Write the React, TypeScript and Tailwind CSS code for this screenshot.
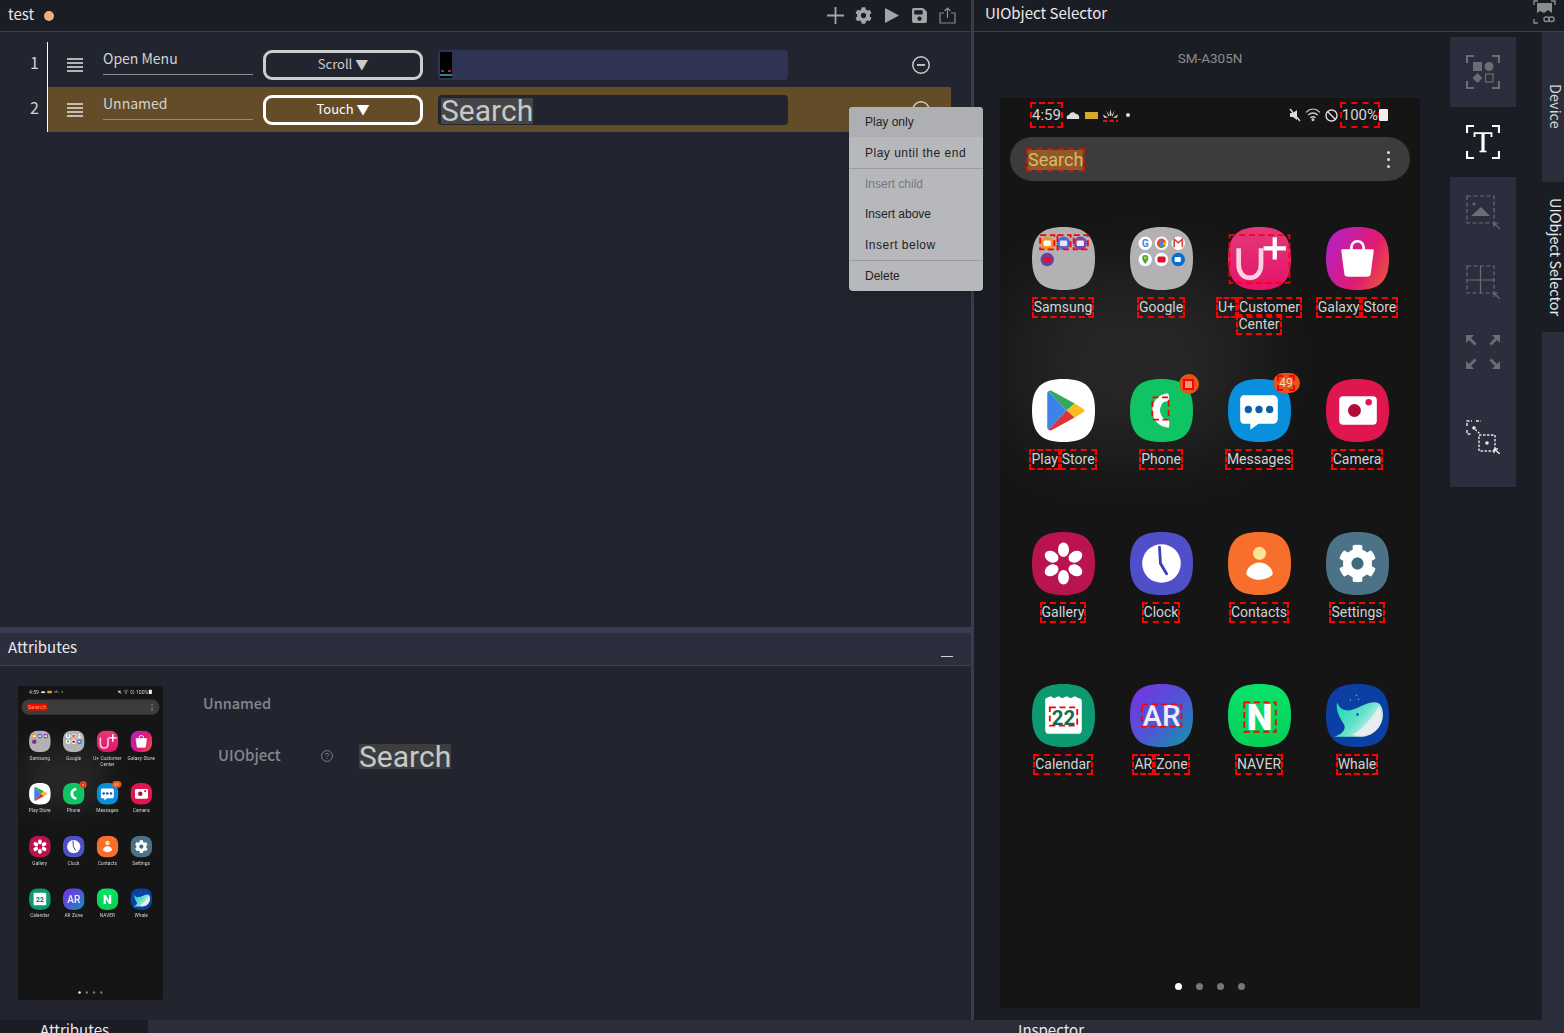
import React from "react";
import { FaCog, FaSave } from "react-icons/fa";

const SQ = "M31 0C53 0 62 9 62 31S53 62 31 62S0 53 0 31S9 0 31 0Z";

// red dashed box drawn by the selector over recognised objects
const Box = ({ x, y, w, h, m }: { x: number; y: number; w: number; h: number; m: boolean }) =>
  m ? <rect x={x} y={y} width={w} height={h} fill="none" stroke="#f00" strokeWidth="1.8" strokeDasharray="6 3.5" /> : null;

const Svg = ({ children }: { children: React.ReactNode }) => (
  <svg width="63" height="63" viewBox="0 0 62 62" className="block">
    {children}
  </svg>
);

const Mini = ({ x, y, c, inner }: { x: number; y: number; c: string; inner: string }) => (
  <g>
    <circle cx={x} cy={y} r="6.6" fill={c} />
    <rect x={x - 3.6} y={y - 2.6} width="7.2" height="5.2" rx="1" fill={inner} />
  </g>
);

const IconSamsung = ({ m }: { m: boolean }) => (
  <Svg>
    <path d={SQ} fill="#b3b1b3" />
    <Mini x={15} y={16} c="#f29423" inner="#fff" />
    <Mini x={31} y={16} c="#5566cc" inner="#e4e6f5" />
    <Mini x={47.5} y={16} c="#7c45ac" inner="#eee" />
    <Mini x={15} y={32} c="#6a3fa6" inner="#e0102e" />
    <Box x={8} y={8} w={14} h={14} m={m} />
    <Box x={25} y={8} w={13} h={14} m={m} />
    <Box x={41} y={8} w={14} h={14} m={m} />
  </Svg>
);

const IconGoogle = () => (
  <Svg>
    <path d={SQ} fill="#b3b1b3" />
    <circle cx="15" cy="16" r="6.6" fill="#fff" />
    <text x="15" y="19.5" textAnchor="middle" fontSize="10" fontWeight="700" fontFamily="Roboto" fill="#4285f4">G</text>
    <circle cx="31" cy="16" r="6.6" fill="#fff" />
    <circle cx="31" cy="16" r="4.6" fill="#e14b3d" />
    <path d="M31 16L35 19L29 21Z" fill="#34a853" />
    <path d="M31 16L36 14L35 19Z" fill="#fbbc05" />
    <circle cx="31" cy="16" r="2" fill="#4285f4" />
    <circle cx="47.5" cy="16" r="6.6" fill="#fff" />
    <path d="M43.5 20V12L47.5 15.5L51.5 12V20" fill="none" stroke="#d94436" strokeWidth="1.6" />
    <circle cx="15" cy="32" r="6.6" fill="#fff" />
    <path d="M15 36.5C13 33.5 12 32.5 12 30.5A3 3 0 0118 30.5C18 32.5 17 33.5 15 36.5Z" fill="#34a853" />
    <circle cx="15" cy="30.5" r="1.4" fill="#fbbc05" />
    <circle cx="31" cy="32" r="6.6" fill="#fff" />
    <rect x="27" y="29" width="8" height="6" rx="1.5" fill="#e0102e" />
    <circle cx="47.5" cy="32" r="6.6" fill="#0b6fd0" />
    <rect x="44" y="29.5" width="6" height="5" rx="1" fill="#fff" />
  </Svg>
);

const IconUplus = ({ m }: { m: boolean }) => (
  <Svg>
    <defs>
      <linearGradient id="uplusFill" x1="0" y1="0" x2="0" y2="1">
        <stop offset="0" stopColor="#e23a78" />
        <stop offset="1" stopColor="#e6126c" />
      </linearGradient>
    </defs>
    <path d={SQ} fill="url(#uplusFill)" />
    <path d="M10.5 21V37C10.500 45 15 50 21.500 50C28 50 32.500 45 32.500 37V21" fill="none" stroke="#fbd3e3" strokeWidth="4.6" />
    <path d="M46 10V32M35 21H57" stroke="#fff" strokeWidth="4.2" />
    <Box x={1.5} y={8} w={59} h={47} m={m} />
  </Svg>
);

const IconStore = () => (
  <Svg>
    <defs>
      <linearGradient id="storeFill" x1="0" y1="0.3" x2="1" y2="0.8">
        <stop offset="0" stopColor="#b820c0" />
        <stop offset="0.6" stopColor="#e01a72" />
        <stop offset="1" stopColor="#ee5240" />
      </linearGradient>
    </defs>
    <path d={SQ} fill="url(#storeFill)" />
    <path d="M16 23H46L43 46C43 47 42 48 40 48H22C20 48 19 47 19 46Z" fill="#fff" stroke="#fff" strokeWidth="2" strokeLinejoin="round" />
    <path d="M25 24V20A6 6 0 0137 20V24" fill="none" stroke="#fff" strokeWidth="2.6" />
  </Svg>
);

const IconPlay = () => (
  <Svg>
    <path d={SQ} fill="#fff" />
    <path d="M16 12L34 31L16 50C15 49 15 48 15 47V15C15 14 15 13 16 12Z" fill="#3b83e8" />
    <path d="M16 12C17 11 19 11 20 12L42 24L34 31Z" fill="#34a85a" />
    <path d="M42 24L50 29C52 30 52 32 50 33L42 38L34 31Z" fill="#fbbc20" />
    <path d="M16 50L34 31L42 38L20 50C19 51 17 51 16 50Z" fill="#dc3434" />
  </Svg>
);

const IconPhone = ({ m }: { m: boolean }) => (
  <Svg>
    <path d={SQ} fill="#10c463" />
    <path d="M37 14C28 15 22 22 22 31C22 40 28 47 38 48C39 46 39 42 38 40C34 41 30 37 29.500 31C30 25 33 21 37 22C39 20 39 16 37 14Z" fill="#fff" />
    <Box x={22} y={18} w={16} h={22} m={m} />
  </Svg>
);

const IconMessages = () => (
  <Svg>
    <path d={SQ} fill="#0a8fdc" />
    <path d="M16 16H44C47 16 49 18 49 21V39C49 42 47 44 44 44H30L22 50V44H16C13 44 12 42 12 39V21C12 18 13 16 16 16Z" fill="#fff" />
    <circle cx="20" cy="30" r="3.6" fill="#0a5fa8" />
    <circle cx="30.5" cy="30" r="3.6" fill="#0a5fa8" />
    <circle cx="41" cy="30" r="3.6" fill="#0a5fa8" />
  </Svg>
);

const IconCamera = () => (
  <Svg>
    <path d={SQ} fill="#e0174f" />
    <rect x="13" y="17" width="37" height="28" rx="4" fill="#fff" />
    <circle cx="28" cy="31" r="6.4" fill="#b00c38" />
    <circle cx="42" cy="23" r="3.2" fill="#e0174f" />
  </Svg>
);

const IconGallery = () => (
  <Svg>
    <path d={SQ} fill="#b91350" />
    {[0, 60, 120, 180, 240, 300].map((a) => (
      <ellipse key={a} cx="31" cy="17.500" rx="5.400" ry="7.200" fill="#fff" transform={`rotate(${a} 31 31)`} />
    ))}
    <circle cx="31" cy="31" r="4.400" fill="#b91350" />
  </Svg>
);

const IconClock = () => (
  <Svg>
    <path d={SQ} fill="#4f4fc9" />
    <circle cx="31" cy="31" r="19" fill="#fff" />
    <path d="M29 15L30 31L36 41" fill="none" stroke="#4040b0" strokeWidth="2.800" strokeLinecap="round" />
  </Svg>
);

const IconContacts = () => (
  <Svg>
    <path d={SQ} fill="#f86e2b" />
    <circle cx="31" cy="21" r="6.400" fill="#fde29a" />
    <path d="M31 30C39 30 44 37 44 41C44 43 38 47 31 47C24 47 18 43 18 41C18 37 23 30 31 30Z" fill="#fff" />
  </Svg>
);

const IconSettings = () => (
  <Svg>
    <path d={SQ} fill="#4b7287" />
    <circle cx="31" cy="31" r="11" fill="#3f6a7c" />
    <FaCog x={12} y={12} size={38} color="#fff" />
  </Svg>
);

const IconCalendar = ({ m }: { m: boolean }) => (
  <Svg>
    <path d={SQ} fill="#0e9a70" />
    <path d="M14 14L18 12L22 14L26 12L30 14L34 12L38 14L42 12L46 14C48 14 49 15 49 17V45C49 47 48 49 46 49H16C14 49 13 47 13 45V17C13 15 13 14 14 14Z" fill="#fff" />
    <text x="31" y="40" textAnchor="middle" fontSize="20" fontWeight="700" fontFamily="Roboto" fill="#0d6e54">22</text>
    <Box x={17.5} y={23} w={27} h={18} m={m} />
  </Svg>
);

const IconAr = ({ m }: { m: boolean }) => (
  <Svg>
    <defs>
      <linearGradient id="arFill" x1="0" y1="0" x2="1" y2="1">
        <stop offset="0" stopColor="#7a30e4" />
        <stop offset="0.55" stopColor="#4d58d4" />
        <stop offset="1" stopColor="#0a9ca4" />
      </linearGradient>
    </defs>
    <path d={SQ} fill="url(#arFill)" />
    <text x="31" y="41" textAnchor="middle" fontSize="29" fontWeight="500" fontFamily="Roboto" fill="#f0ecfb">AR</text>
    <Box x={11.5} y={20} w={39} h={22} m={m} />
  </Svg>
);

const IconNaver = ({ m }: { m: boolean }) => (
  <Svg>
    <defs>
      <linearGradient id="naverFill" x1="0" y1="0" x2="0" y2="1">
        <stop offset="0" stopColor="#08e268" />
        <stop offset="1" stopColor="#06cf58" />
      </linearGradient>
    </defs>
    <path d={SQ} fill="url(#naverFill)" />
    <text x="31" y="45" textAnchor="middle" fontSize="36" fontWeight="900" fontFamily="Roboto" fill="#fff">N</text>
    <Box x={16} y={18} w={31} h={29} m={m} />
  </Svg>
);

const IconWhale = () => (
  <Svg>
    <defs>
      <linearGradient id="whaleBody" x1="0" y1="0" x2="1" y2="0.6">
        <stop offset="0" stopColor="#10d8b0" />
        <stop offset="0.55" stopColor="#5fe0c8" />
        <stop offset="1" stopColor="#f2f4f6" />
      </linearGradient>
    </defs>
    <path d={SQ} fill="#0c3fa4" />
    <path d="M11 18C13 24 17 26 22 26C30 26 38 18 48 18C54 18 56 24 56 30C56 42 46 52 34 52H8C14 50 20 46 18 40C14 34 9 26 11 18Z" fill="url(#whaleBody)" />
    <path d="M26 50C34 46 44 36 52 22C56 30 54 42 44 48C38 52 32 52 26 50Z" fill="#e9edf0" />
    <circle cx="30" cy="11" r="0.7" fill="#8aa8e0" />
    <circle cx="24" cy="16" r="0.7" fill="#8aa8e0" />
    <circle cx="32" cy="15" r="0.7" fill="#8aa8e0" />
    <circle cx="31" cy="30" r="1.2" fill="#0c3fa4" />
  </Svg>
);

type AppItem = { lines: string[][]; icon: (m: boolean) => React.ReactNode; badge?: string };

const APPS: AppItem[] = [
  { lines: [["Samsung"]], icon: (m) => <IconSamsung m={m} /> },
  { lines: [["Google"]], icon: () => <IconGoogle /> },
  { lines: [["U+", "Customer"], ["Center"]], icon: (m) => <IconUplus m={m} /> },
  { lines: [["Galaxy", "Store"]], icon: () => <IconStore /> },
  { lines: [["Play", "Store"]], icon: () => <IconPlay /> },
  { lines: [["Phone"]], icon: (m) => <IconPhone m={m} />, badge: "1" },
  { lines: [["Messages"]], icon: () => <IconMessages />, badge: "49" },
  { lines: [["Camera"]], icon: () => <IconCamera /> },
  { lines: [["Gallery"]], icon: () => <IconGallery /> },
  { lines: [["Clock"]], icon: () => <IconClock /> },
  { lines: [["Contacts"]], icon: () => <IconContacts /> },
  { lines: [["Settings"]], icon: () => <IconSettings /> },
  { lines: [["Calendar"]], icon: (m) => <IconCalendar m={m} /> },
  { lines: [["AR", "Zone"]], icon: (m) => <IconAr m={m} /> },
  { lines: [["NAVER"]], icon: (m) => <IconNaver m={m} /> },
  { lines: [["Whale"]], icon: () => <IconWhale /> },
];

const Word = ({ m, children }: { m: boolean; children: React.ReactNode }) => (
  <span className={m ? "outline-2 outline-dashed outline-[#f00]" : ""}>{children}</span>
);

const StatusBar = ({ m }: { m: boolean }) => (
  <div className="flex h-[36px] items-center justify-between px-[32px] pb-[2px] font-['Roboto'] text-[15px] text-[#d4d4d4]">
    <div className="flex items-center gap-[5px]">
      <Word m={m}>4:59</Word>
      <svg width="14" height="8" viewBox="0 0 14 8"><path d="M1 8C0 6 1 4 3 4C4 1 8 0 10 3C12 3 14 5 13 8Z" fill="#ddd" /></svg>
      <span className="h-[7px] w-[13px] bg-[#d8a82c]" />
      <svg width="15" height="13" viewBox="0 0 14 12">
        <path d="M7 0L8 5L7 7L6 5ZM3 1L6 6L5 7ZM11 1L8 6L9 7ZM0 5L5 8H1ZM14 5L9 8H13Z" fill="#ccc" />
        {m && <path d="M0 11H14" stroke="#f00" strokeWidth="2" strokeDasharray="4 2" />}
      </svg>
      <span className="ml-[3px] h-[4px] w-[4px] rounded-full bg-[#ddd]" />
    </div>
    <div className="flex items-center gap-[3px]">
      <svg width="14" height="14" viewBox="0 0 14 14">
        <path d="M2 5H5L9 2V12L5 9H2Z" fill="#ddd" />
        <path d="M2 1L12 13" stroke="#ddd" strokeWidth="1.4" />
      </svg>
      <svg width="17" height="14" viewBox="0 0 16 13" fill="none" stroke="#ccc" strokeWidth="1.2">
        <path d="M1 4C5 0 10 0 14 4M3 6.500C6 4 9 4 12 6.500M5 9C6.500 8 8.500 8 10 9" />
        <circle cx="7.500" cy="11" r="0.8" fill="#ccc" />
      </svg>
      <svg width="13" height="13" viewBox="0 0 13 13" fill="none" stroke="#ddd" strokeWidth="1.4">
        <circle cx="6.500" cy="6.500" r="5.500" />
        <path d="M2.500 2.500L10.500 10.500" />
      </svg>
      <span className="ml-[1px] flex items-center gap-[1px]">
        <Word m={m}>100%</Word>
        <span className="h-[12px] w-[9px] rounded-[1px] bg-[#eee]" />
      </span>
    </div>
  </div>
);

const Phone = ({ m, hit }: { m: boolean; hit?: boolean }) => (
  <div className="relative h-[910px] w-[420px] overflow-hidden bg-[#151515] font-['Roboto']">
    <div className="absolute left-[20px] top-[180px] h-[170px] w-[230px] rounded-[50px] bg-white/8 blur-2xl" />
    <div className="relative">
      <StatusBar m={m} />
      <div className="mx-[10px] mt-[3px] flex h-[44px] items-center justify-between rounded-full bg-[#3c3c3c] pl-[18px] pr-[20px]">
        {hit ? (
          <span className="bg-[#f00] text-[18px] leading-[20px] text-[#d8b050]">Search</span>
        ) : (
          <span className="mt-[2px] bg-[#8f5a28] text-[18px] leading-[20px] text-[#dcb868] outline-2 outline-dashed outline-[#c01818]">
            Search
          </span>
        )}
        <div className="flex flex-col gap-[4px]">
          <span className="h-[3px] w-[3px] rounded-full bg-[#ddd]" />
          <span className="h-[3px] w-[3px] rounded-full bg-[#ddd]" />
          <span className="h-[3px] w-[3px] rounded-full bg-[#ddd]" />
        </div>
      </div>
      <div className="mt-[45.5px] grid auto-rows-[152.67px] grid-cols-4 px-[14px]">
        {APPS.map((app) => (
          <div key={app.lines[0].join(" ")} className="flex flex-col items-center">
            <div className="relative h-[63px] w-[63px]">
              {app.icon(m)}
              {app.badge === "1" && (
                <span className="absolute right-[-6px] top-[-5px] flex h-[20px] w-[20px] items-center justify-center rounded-full bg-[#e4551c]">
                  <span className="h-[7px] w-[7px] bg-[#e89a70] outline-2 outline-[#f00]" />
                </span>
              )}
              {app.badge === "49" && (
                <span className="absolute right-[-9px] top-[-6px] flex h-[20px] w-[27px] items-center justify-center rounded-full bg-[#e4551c] text-[12px] leading-none text-[#f3d9c0]">
                  <Word m={m}>49</Word>
                </span>
              )}
            </div>
            <div className="mt-[9px] flex flex-col items-center text-[14px] leading-[17px] text-[#d2d2d2]">
              {app.lines.map((line) => (
                <div key={line[0]} className="flex gap-[4px] whitespace-nowrap">
                  {line.map((w) => (
                    <Word key={w} m={m}>
                      {w}
                    </Word>
                  ))}
                </div>
              ))}
            </div>
          </div>
        ))}
      </div>
    </div>
    <div className="absolute bottom-[18px] left-0 flex w-full justify-center gap-[14px] pr-[1px]">
      <span className="h-[7px] w-[7px] rounded-full bg-white" />
      <span className="h-[7px] w-[7px] rounded-full bg-[#777]" />
      <span className="h-[7px] w-[7px] rounded-full bg-[#777]" />
      <span className="h-[7px] w-[7px] rounded-full bg-[#777]" />
    </div>
  </div>
);

const Hamburger = () => (
  <svg width="16" height="14" viewBox="0 0 16 14" className="shrink-0">
    <path d="M0 1H16M0 5H16M0 9H16M0 13H16" stroke="#e4e4e4" strokeWidth="1.6" />
  </svg>
);

const MinusCircle = () => (
  <svg width="18" height="18" viewBox="0 0 18 18" fill="none" stroke="#cfcfcf" strokeWidth="1.4" className="shrink-0">
    <circle cx="9" cy="9" r="8.200" />
    <path d="M5 9H13" strokeWidth="1.800" />
  </svg>
);

const StepRow = ({
  active,
  name,
  action,
  children,
}: {
  active?: boolean;
  name: string;
  action: string;
  children: React.ReactNode;
}) => (
  <div className={active ? "flex h-[45px] items-center bg-[#644c29] pl-[19px]" : "flex h-[45px] items-center pl-[19px]"}>
    <Hamburger />
    <div className="mb-[6px] ml-[20px] w-[150px] border-b border-[#8c8c8c] pb-[6px] text-[14px] leading-[19px] text-[#d2d2d2]">
      {name}
    </div>
    <div
      className={
        active
          ? "ml-[10px] flex h-[30px] w-[160px] items-center justify-center rounded-[9px] border-[3px] border-white pb-[2px] text-[13px] text-white"
          : "ml-[10px] flex h-[30px] w-[160px] items-center justify-center rounded-[9px] border-[3px] border-[#cdcdcd] pb-[2px] text-[13px] text-[#cdcdcd]"
      }
    >
      {action} ▼
    </div>
    {children}
    <div className="ml-[124px]">
      <MinusCircle />
    </div>
  </div>
);

const Corners = ({ c }: { c: string }) => (
  <path d="M1 8V1H8M26 1H33V8M1 26V33H8M26 33H33V26" fill="none" stroke={c} strokeWidth="2.200" />
);

const Cursor = ({ c }: { c: string }) => <path d="M28 28L34 34M28 28V32M28 28H32" fill="none" stroke={c} strokeWidth="1.200" />;

const TOOL = "#6c6d72";

const ToolObjects = () => (
  <svg width="34" height="34" viewBox="0 0 34 34">
    <Corners c={TOOL} />
    <rect x="7" y="7" width="9" height="9" fill={TOOL} />
    <circle cx="23" cy="11.500" r="4.500" fill={TOOL} />
    <path d="M11.500 18L16.500 23L11.500 28L6.500 23Z" fill={TOOL} />
    <rect x="19.500" y="19" width="7.500" height="8" fill="none" stroke={TOOL} strokeWidth="1.200" />
  </svg>
);

const ToolText = () => (
  <svg width="34" height="34" viewBox="0 0 34 34">
    <Corners c="#fff" />
    <path d="M8.500 12V8.200H25.500V12" fill="none" stroke="#fff" strokeWidth="1.800" />
    <path d="M17 8V26" stroke="#fff" strokeWidth="3.200" />
    <path d="M13.500 26.500H20.500" stroke="#fff" strokeWidth="1.600" />
  </svg>
);

const ToolImage = () => (
  <svg width="34" height="34" viewBox="0 0 34 34">
    <rect x="1" y="1" width="27" height="27" fill="none" stroke={TOOL} strokeWidth="1.200" strokeDasharray="4 2.500" />
    <circle cx="8" cy="9" r="1.500" fill={TOOL} />
    <path d="M5 21L15 12L24 21Z" fill={TOOL} />
    <Cursor c={TOOL} />
  </svg>
);

const ToolGrid = () => (
  <svg width="34" height="34" viewBox="0 0 34 34">
    <rect x="1" y="1" width="27" height="27" fill="none" stroke={TOOL} strokeWidth="1.200" strokeDasharray="4 2.500" />
    <path d="M14.500 1V28M1 15H28" stroke={TOOL} strokeWidth="1.200" />
    <Cursor c={TOOL} />
  </svg>
);

const ToolResize = () => (
  <svg width="34" height="34" viewBox="0 0 34 34" fill={TOOL} stroke={TOOL} strokeWidth="0">
    <path d="M0 0H8L0 8Z" />
    <path d="M3 3L9.500 9.500" strokeWidth="2.800" />
    <path d="M34 0H26L34 8Z" />
    <path d="M31 3L24.500 9.500" strokeWidth="2.800" />
    <path d="M0 34H8L0 26Z" />
    <path d="M3 31L9.500 24.500" strokeWidth="2.800" />
    <path d="M34 34H26L34 26Z" />
    <path d="M31 31L24.500 24.500" strokeWidth="2.800" />
  </svg>
);

const ToolCompare = () => (
  <svg width="34" height="34" viewBox="0 0 34 34" fill="none" stroke="#e8e8e8" strokeWidth="1.400">
    <path d="M1 6V1H6M10 1H15M1 10V14H5" strokeDasharray="3 1.500" />
    <path d="M7 7L14 14" strokeDasharray="2 1.500" />
    <circle cx="8" cy="8" r="1.800" fill="#e8e8e8" stroke="none" />
    <rect x="13" y="15" width="16" height="16" strokeDasharray="2.500 1.500" />
    <circle cx="21" cy="23" r="1.800" fill="#e8e8e8" stroke="none" />
    <path d="M28 29L34 34M28 29V33M28 29H32" />
  </svg>
);

const TopRightIcon = () => (
  <svg width="23" height="24" viewBox="0 0 23 24" fill="none" stroke="#8b8c90" strokeWidth="1.400" className="absolute right-[8px] top-0">
    <path d="M1 5V1H5M18 1H22V5M1 19V23H5" />
    <path d="M4 3H19V13L15 10L11 13L7 11L4 13Z" fill="#8b8c90" stroke="none" />
    <rect x="11" y="17" width="5" height="4.500" rx="2" />
    <rect x="16" y="17" width="5" height="4.500" rx="2" />
  </svg>
);

const MenuItem = "flex items-center pl-[16px]";

const App = () => {
  return (
    <div className="flex h-[1033px] w-[1564px] flex-col overflow-hidden bg-[#2b2d3a] font-['Noto_Sans_CJK_KR','Noto_Sans',sans-serif]">
      <div className="flex h-[1020px]">
        {/* Left: scenario steps and attributes */}
        <div className="flex w-[971px] flex-col bg-[#22252f]">
          <div className="flex h-[32px] shrink-0 items-center justify-between border-b border-[#3a3d4d] bg-[#1b1d25] pl-[8px] pr-[15px]">
            <div className="flex items-center gap-[10px]">
              <span className="mb-[5px] text-[15px] leading-none text-[#e6e6e6]">test</span>
              <span className="h-[10px] w-[10px] rounded-full bg-[#eeb07a]" />
            </div>
            <div className="flex items-center gap-[11px] text-[#a4a5a8]">
              <svg width="17" height="17" viewBox="0 0 17 17"><path d="M8.500 0V17M0 8.500H17" stroke="#a4a5a8" strokeWidth="1.800" /></svg>
              <FaCog size={17} />
              <svg width="17" height="17" viewBox="0 0 17 17"><path d="M2 1L16 8.500L2 16Z" fill="#a4a5a8" /></svg>
              <FaSave size={17} />
              <svg width="17" height="17" viewBox="0 0 17 17" fill="none" stroke="#8b8c90" strokeWidth="1.200">
                <path d="M5 6H1V16H16V6H12M8.500 11V1M5.500 4L8.500 1L11.500 4" />
              </svg>
            </div>
          </div>

          <div className="relative flex h-[595px] shrink-0 pt-[10px]">
            <div className="flex w-[47px] shrink-0 flex-col pr-[8px] text-right text-[16px] text-[#d2d2d2]">
              <div className="flex h-[45px] items-center justify-end pb-[5px]">1</div>
              <div className="flex h-[45px] items-center justify-end pb-[5px]">2</div>
            </div>
            <div className="h-[90px] w-[904px] border-l border-white">
              <StepRow name="Open Menu" action="Scroll">
                <div className="ml-[15px] flex h-[30px] w-[350px] rounded-[4px] bg-[#2f3454] pl-[2px] pt-[2px]">
                  <div className="relative h-[26px] w-[12px] bg-black">
                    <span className="absolute bottom-[2px] left-0 h-[2px] w-full bg-[#2a8a7a]" />
                    <span className="absolute bottom-[6px] left-[1px] h-[2px] w-[3px] bg-[#a03040]" />
                    <span className="absolute bottom-[6px] right-[1px] h-[2px] w-[3px] bg-[#a03040]" />
                  </div>
                </div>
              </StepRow>
              <StepRow active name="Unnamed" action="Touch">
                <div className="ml-[15px] flex h-[30px] w-[350px] items-center rounded-[4px] bg-[#22252f] pl-[3px]">
                  <span className="mt-[2px] bg-[#454545] font-['Roboto'] text-[30px] leading-[26px] text-[#c8c8c8]">Search</span>
                </div>
              </StepRow>
            </div>

            <div className="absolute left-[849px] top-[75px] z-10 flex w-[134px] flex-col overflow-hidden rounded-[4px] bg-[#b7b8bc] font-['Liberation_Sans'] text-[12px] text-[#1f1f22] shadow-lg">
              <div className={`${MenuItem} h-[30px] bg-[#aeafb2]`}>Play only</div>
              <div className={`${MenuItem} h-[32px] border-b border-[#9a9b9f] tracking-[0.5px]`}>Play until the end</div>
              <div className={`${MenuItem} h-[30px] text-[#77787c]`}>Insert child</div>
              <div className={`${MenuItem} h-[30px]`}>Insert above</div>
              <div className={`${MenuItem} h-[32px] border-b border-[#9a9b9f] tracking-[0.5px]`}>Insert below</div>
              <div className={`${MenuItem} h-[30px]`}>Delete</div>
            </div>
          </div>

          <div className="h-[6px] shrink-0 bg-[#383c50]" />
          <div className="flex h-[33px] shrink-0 items-center justify-between border-b border-[#3d404f] bg-[#2b2e3d] pl-[8px] pr-[18px]">
            <span className="mb-[4px] text-[15px] text-[#eaeaea]">Attributes</span>
            <span className="mt-[14px] h-[1px] w-[12px] bg-[#d0d0d0]" />
          </div>
          <div className="flex flex-1 pl-[18px] pt-[20px]">
            <div className="h-[314px] w-[145px] shrink-0 overflow-hidden">
              <div className="origin-top-left scale-[0.345] blur-[1.5px]">
                <Phone m={false} hit />
              </div>
            </div>
            <div className="ml-[40px] flex flex-col">
              <div className="mt-[6px] text-[14.500px] font-medium leading-[22px] text-[#85868d]">Unnamed</div>
              <div className="ml-[15px] mt-[29px] flex items-center">
                <span className="mb-[2px] w-[103px] text-[15px] font-medium text-[#85868d]">UIObject</span>
                <svg width="12" height="12" viewBox="0 0 12 12" fill="none" stroke="#85868d" strokeWidth="0.900">
                  <circle cx="6" cy="6" r="5.400" />
                  <path d="M4.300 4.700C4.300 3 7.700 3 7.700 4.700C7.700 6 6 5.800 6 7.300M6 8.300V9.200" />
                </svg>
                <span className="ml-[26px] mt-[1px] bg-[#3d3d3d] font-['Roboto'] text-[30px] leading-[25px] text-[#c8c8c8]">Search</span>
              </div>
            </div>
          </div>
        </div>

        <div className="w-[3px] shrink-0 bg-[#383c50]" />

        {/* Right: object selector */}
        <div className="flex flex-1 flex-col bg-[#1b1d25]">
          <div className="relative flex h-[32px] shrink-0 items-center border-b border-[#3a3d4d] pb-[4px] pl-[11px] text-[15px] text-[#eaeaea]">
            UIObject Selector
            <TopRightIcon />
          </div>
          <div className="flex flex-1">
            <div className="flex w-[568px] shrink-0 pl-[26px]">
              <div className="flex w-[420px] flex-col">
                <div className="flex h-[66px] shrink-0 items-center justify-center pb-[14px] font-['Roboto'] text-[13.500px] text-[#8c8c8c]">SM-A305N</div>
                <Phone m={true} />
              </div>
              <div className="ml-[30px] mt-[5px] flex w-[66px] flex-col">
                <div className="flex h-[70px] items-center justify-center bg-[#2b2e3d]"><ToolObjects /></div>
                <div className="flex h-[70px] items-center justify-center"><ToolText /></div>
                <div className="flex h-[310px] flex-col items-center bg-[#2b2e3d]">
                  <div className="flex h-[70px] items-center"><ToolImage /></div>
                  <div className="flex h-[70px] items-center"><ToolGrid /></div>
                  <div className="flex h-[70px] items-center"><ToolResize /></div>
                  <div className="flex h-[85px] items-center pt-[14px]"><ToolCompare /></div>
                </div>
              </div>
            </div>
            <div className="flex w-[22px] flex-col bg-[#2b2d3a] text-[14.500px] text-[#d8d8d8]">
              <div className="h-[150px] pt-[52px] leading-[16px] [writing-mode:vertical-rl]">Device</div>
              <div className="h-[150px] bg-[#1b1d25] pt-[16px] leading-[16px] text-[#e8e8e8] [writing-mode:vertical-rl]">UIObject Selector</div>
            </div>
          </div>
        </div>
      </div>

      {/* Bottom dock tabs, cut off by the window */}
      <div className="flex h-[13px] shrink-0 overflow-hidden text-[15px] leading-[20px] text-[#eaeaea]">
        <div className="h-[13px] w-[148px] bg-[#1b1d25] pl-[40px]">Attributes</div>
        <div className="ml-[870px]">Inspector</div>
      </div>
    </div>
  );
};

export default App;
